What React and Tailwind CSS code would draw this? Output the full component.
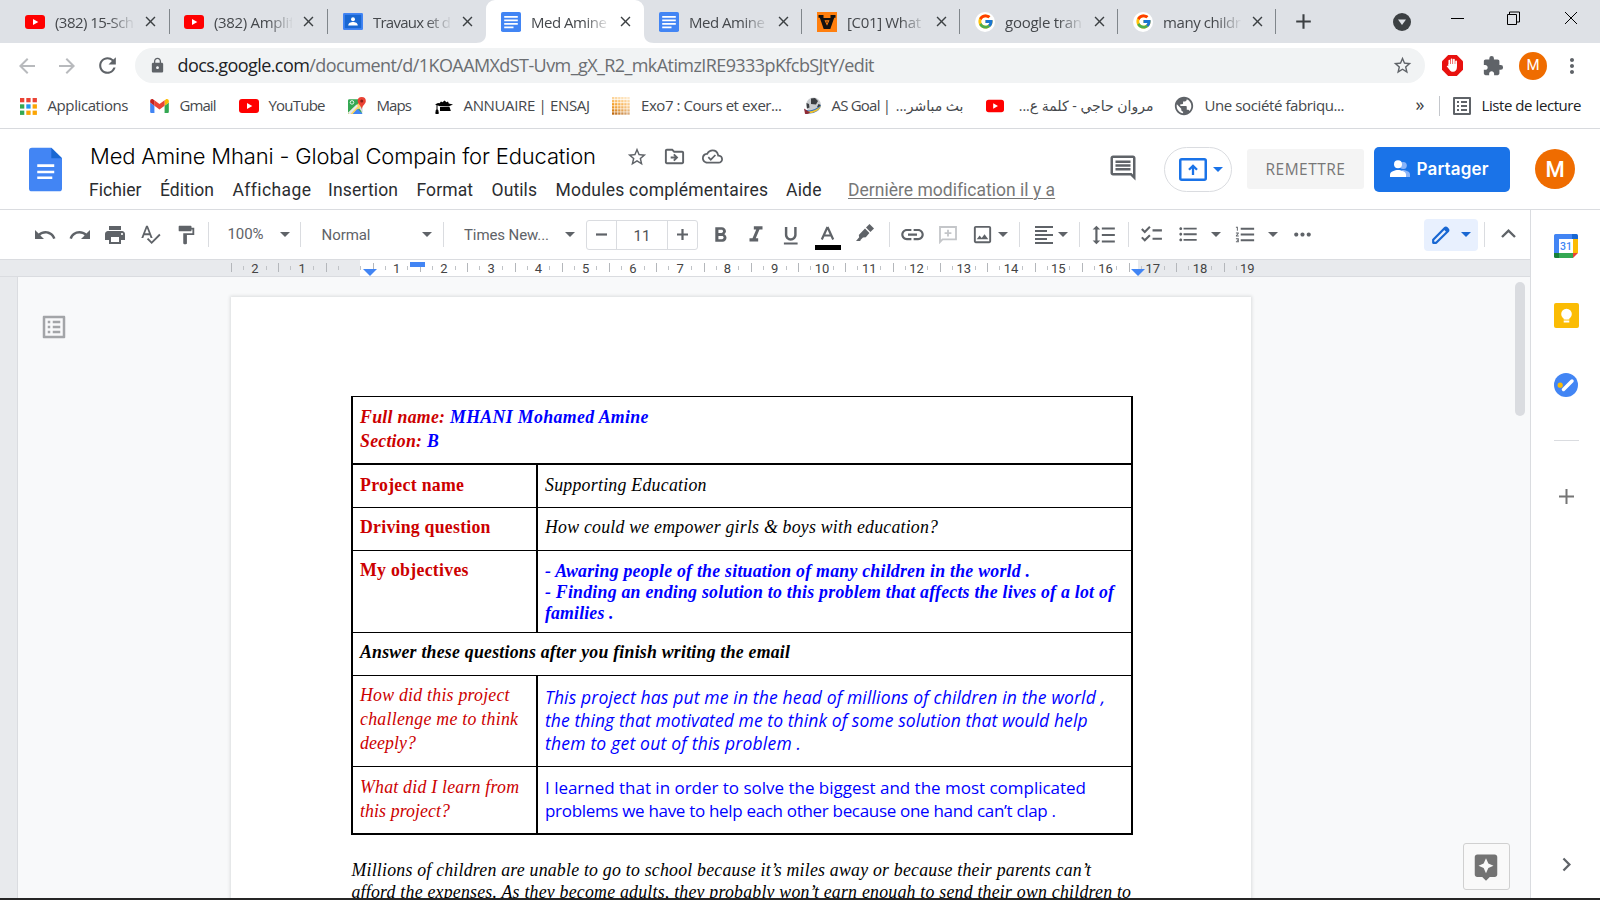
import React, { useLayoutEffect, useRef } from "react";
import {
  MdUndo, MdRedo, MdPrint, MdSpellcheck, MdFormatPaint, MdFormatBold, MdFormatItalic,
  MdFormatUnderlined, MdLink, MdOutlineImage, MdFormatAlignLeft, MdFormatLineSpacing,
  MdChecklist, MdFormatListBulleted, MdFormatListNumbered, MdMoreHoriz,
  MdStarBorder, MdOutlineDriveFileMove, MdOutlineCloudDone, MdLock,
  MdArrowBack, MdArrowForward, MdRefresh, MdExtension, MdMoreVert, MdPublic, MdListAlt,
  MdAdd, MdClose, MdChevronRight, MdAssistant, MdOutlineInsertComment,
} from "react-icons/md";
import { FcGoogle } from "react-icons/fc";

const UI = "font-['Segoe_UI','Open_Sans',sans-serif]";

/* A single line of text whose letter spacing is set so that it takes up w pixels. */
function Fit({ w, className = "", children }) {
  const ref = useRef(null);
  useLayoutEffect(() => {
    const el = ref.current;
    el.style.letterSpacing = "0px";
    const natural = el.getBoundingClientRect().width;
    const n = el.textContent.length;
    el.style.letterSpacing = `${(w - natural) / Math.max(1, n - 1)}px`;
  }, [w]);
  return (
    <span className={`block shrink-0 whitespace-pre ${className}`} style={{ width: w }}>
      <span ref={ref} className="whitespace-pre">{children}</span>
    </span>
  );
}

const YouTube = ({ className = "w-[20px] h-[14px]" }) => (
  <svg viewBox="0 0 20 14" className={className}>
    <rect width="20" height="14" rx="3" fill="#f00" />
    <path d="M8 4l5.3 3L8 10z" fill="#fff" />
  </svg>
);
const Classroom = () => (
  <svg viewBox="0 0 20 17" className="w-[20px] h-[17px]">
    <rect width="20" height="17" rx="1.2" fill="#4285f4" />
    <rect x="1.8" y="1.8" width="16.4" height="13.4" fill="#1967d2" />
    <circle cx="10" cy="6.3" r="2" fill="#fff" />
    <path d="M5.2 12.6c0-2.6 2.6-3.6 4.8-3.6s4.8 1 4.8 3.6z" fill="#fff" />
  </svg>
);
const DocFav = () => (
  <svg viewBox="0 0 20 20" className="w-[20px] h-[20px]">
    <rect width="20" height="20" rx="1.8" fill="#4285f4" />
    <path d="M3.2 4.8h13.6M3.2 8.3h13.6M3.2 11.8h13.6M3.2 15.3h9.3" stroke="#fff" strokeWidth="1.8" />
  </svg>
);
const Orange = () => (
  <svg viewBox="0 0 20 20" className="w-[20px] h-[20px]">
    <rect width="20" height="20" fill="#ff7f0e" />
    <path d="M1.500 3h5v3h7V3h5v2.800h-1.300L13.300 17H6.700L2.800 5.800H1.500z" fill="#111" />
    <path d="M7.500 8.300h5L10 13.800z" fill="#ff7f0e" />
    <path d="M9.200 9.600h1.600L10 11.400z" fill="#111" />
  </svg>
);
const GFav = () => (
  <span className="flex w-[20px] h-[20px] rounded-full bg-white items-center justify-center">
    <FcGoogle size={17} />
  </span>
);
const Apps = () => {
  const c = ["#ea4335", "#ea4335", "#ea4335", "#34a853", "#2196f3", "#fba504", "#34a853", "#fba504", "#fba504"];
  return (
    <svg viewBox="0 0 17 17" className="w-[17px] h-[17px]">
      {c.map((f, i) => <rect key={i} x={(i % 3) * 6.3} y={Math.floor(i / 3) * 6.3} width="4.3" height="4.3" fill={f} />)}
    </svg>
  );
};
const Gmail = () => (
  <svg viewBox="52 42 88 66" className="w-[19px] h-[14px]">
    <path fill="#4285f4" d="M58 108h14V74L52 59v43c0 3.32 2.69 6 6 6" />
    <path fill="#34a853" d="M120 108h14c3.32 0 6-2.69 6-6V59l-20 15" />
    <path fill="#fbbc04" d="M120 48v26l20-15v-8c0-7.42-8.47-11.65-14.4-7.2" />
    <path fill="#ea4335" d="M72 74V48l24 18 24-18v26L96 92" />
    <path fill="#c5221f" d="M52 51v8l20 15V48l-5.600-4.200c-5.940-4.450-14.400-.220-14.400 7.200" />
  </svg>
);
const Maps = () => (
  <svg viewBox="0 0 19 19" className="w-[18px] h-[18px]">
    <path d="M1.500 2.500h13v15.500h-13A1.500 1.500 0 010 16.500V4a1.500 1.500 0 011.500-1.500z" fill="#34a853" />
    <path d="M0 17L15 3v6L5.500 18H1z" fill="#fdd663" />
    <path d="M5 18l5-5.500 5.500 5.500z" fill="#4285f4" />
    <path d="M0 16.500L9 8l1.500 1.500L2.500 18H1.500z" fill="#e8eaed" />
    <path d="M11.500 11.500l4 5.500V9z" fill="#dadce0" />
    <circle cx="4.200" cy="5.700" r="1.900" fill="none" stroke="#fff" strokeWidth=".9" />
    <path d="M14.500 0a4.300 4.300 0 00-4.300 4.300c0 3.200 3.400 4.200 4.300 8.700.9-4.500 4.300-5.500 4.300-8.700A4.300 4.300 0 0014.500 0z" fill="#ea4335" />
    <circle cx="14.500" cy="4.300" r="1.600" fill="#8c1d18" />
  </svg>
);
const Cap = () => (
  <svg viewBox="0 0 18 14" className="w-[18px] h-[14px]">
    <path d="M0 4.500L3 3l1.500.3L6 1.500l1.500.7L9.500.5l2 1.700L13 1.500l.8 2L18 4.500l-4 1.700H5z" fill="#000" />
    <path d="M5 7l9.500-.3 1.300 4.300H5z" fill="#000" />
    <path d="M2 5v5M1.300 10h1.500l.5 3.500H.8z" stroke="#000" strokeWidth="1" fill="#000" />
  </svg>
);
const Exo = () => (
  <svg viewBox="0 0 18 18" className="w-[18px] h-[18px]">
    {Array.from({ length: 36 }, (_, i) => {
      const r = Math.floor(i / 6), c = i % 6;
      const fills = ["#fcd49a", "#fbb95c", "#f5a02c", "#ee9a2c", "#d98218", "#bf6a10"];
      return <rect key={i} x={c * 3.060} y={r * 3.060} width="2.400" height="2.400" fill={fills[r]} opacity={1 - c * 0.090} />;
    })}
  </svg>
);
const Ball = () => (
  <svg viewBox="0 0 19 18" className="w-[19px] h-[18px]">
    <circle cx="10.500" cy="8" r="7.500" fill="#c9cccf" />
    <path d="M8 1.500l4-.5 3 3-2 3.500-5-.5zM3.500 6l2.500 1 .5 3.500-2.500 1zM15.500 7l2.300 1-1.800 3-2-1z" fill="#3b3e42" />
    <path d="M1 12c5 3 11 1 17-4-1 6-9 10-14 8z" fill="#2b6fc4" />
    <path d="M3 14c5 1.500 10-1 15-5C16 14 9 17 5 16z" fill="#f3c32d" />
    <path d="M1 11.500l6 4c-2 1.700-4 1.700-5 1.200z" fill="#8e2a35" />
  </svg>
);
const Tri = ({ className = "", fill = "#5f6368" }) => (
  <svg viewBox="0 0 10 5" className={`w-[10px] h-[5px] ${className}`}><path d="M0 0h10L5 5z" fill={fill} /></svg>
);

const tabs = [
  { icon: <YouTube />, t: "(382) 15-Sch", w: 79, sep: true, pad: "pl-[13px]", box: "w-[79px]" },
  { icon: <YouTube />, t: "(382) Amplif", w: 80, sep: true, pad: "pl-[14px]", box: "w-[78px]" },
  { icon: <Classroom />, t: "Travaux et d", w: 78 },
  { icon: <DocFav />, t: "Med Amine", w: 76, active: true },
  { icon: <DocFav />, t: "Med Amine", w: 76, sep: true },
  { icon: <Orange />, t: "[C01] What", w: 74, sep: true },
  { icon: <GFav />, t: "google tran", w: 77, sep: true },
  { icon: <GFav />, t: "many childr", w: 78, sep: true },
];

function Tab({ icon, t, w, active, sep, pad = "pl-[15px]", box = "w-[78px]" }) {
  return (
    <div className={`relative flex w-[158px] h-[43px] shrink-0 items-center ${pad} ${active ? "bg-white rounded-t-[9px]" : ""}`}>
      {active && (
        <svg viewBox="0 0 178 9" className="absolute left-[-10px] bottom-0 w-[178px] h-[9px]">
          <path d="M10 0v9H0c6 0 10-3 10-9zM168 0v9h10c-6 0-10-3-10-9z" fill="#fff" />
        </svg>
      )}
      <span className="flex w-[20px] shrink-0 justify-center">{icon}</span>
      <div className={`ml-[10px] shrink-0 overflow-hidden whitespace-nowrap [mask-image:linear-gradient(to_right,black_68%,transparent_102%)] ${box}`}>
        <Fit w={w} className="text-[15px] leading-[22px] text-[#45484c]">{t}</Fit>
      </div>
      <MdClose className="ml-[7.500px] shrink-0 text-[#3c4043]" size={17} />
      {sep && <span className="ml-auto w-px h-[25px] bg-[#80868b]" />}
    </div>
  );
}

function TabStrip() {
  return (
    <div className="flex h-[43px] bg-[#dee1e6] pl-[12px] items-center">
      {tabs.map((t, i) => <Tab key={i} {...t} />)}
      <MdAdd className="ml-[15px] shrink-0 text-[#3c4043]" size={25} />
      <svg viewBox="0 0 18 18" className="ml-[77px] shrink-0 w-[18px] h-[18px]">
        <circle cx="9" cy="9" r="9" fill="#3c4043" /><path d="M5 6.500h8L9 12z" fill="#dee1e6" />
      </svg>
      <svg viewBox="0 0 128 14" className="ml-[40px] mb-[7px] shrink-0 w-[128px] h-[14px]" fill="none" stroke="#000" strokeWidth="1">
        <path d="M0 7.500h13M56.500 3.500h9v10h-9zM58.500 3.500v-2.500h10v10h-2.500M114 1l12 12M126 1l-12 12" />
      </svg>
    </div>
  );
}

function AddressBar() {
  return (
    <div className="flex h-[45px] items-center bg-white [&>*]:shrink-0">
      <MdArrowBack className="ml-[15px] text-[#b8babd]" size={24} />
      <MdArrowForward className="ml-[16px] text-[#b8babd]" size={24} />
      <MdRefresh className="ml-[16px] text-[#5f6368]" size={25} />
      <div className="ml-[15px] flex h-[35px] w-[1290px] items-center rounded-full bg-[#f1f3f4] pl-[14px]">
        <MdLock size={17} className="text-[#5f6368]" />
        <Fit w={697} className="ml-[11.500px] mb-[1px] text-[18px] leading-[26px] text-[#6b6e72]">
          <span className="text-[#202124]">docs.google.com</span>/document/d/1KOAAMXdST-Uvm_gX_R2_mkAtimzIRE9333pKfcbSJtY/edit
        </Fit>
        <MdStarBorder size={21} className="ml-auto mr-[12px] text-[#5f6368]" />
      </div>
      <svg viewBox="0 0 21 21" className="ml-[17px] w-[21px] h-[21px]">
        <path d="M6.200 0h8.600L21 6.200v8.600L14.800 21H6.200L0 14.800V6.200z" fill="#e8110f" />
        <path d="M7.300 11V5.700M9.600 10V4.300M11.900 10V4.600M14.100 11V6.300" stroke="#fff" strokeWidth="1.700" strokeLinecap="round" />
        <path d="M6.500 9h8.400v3.500c0 2.600-1.600 4.300-3.700 4.300-2 0-3-.8-3.900-2.400L4.700 11.300c.6-.8 1.300-.6 1.800 0z" fill="#fff" />
      </svg>
      <MdExtension size={22} className="ml-[19px] text-[#5f6368]" />
      <span className="ml-[15px] flex h-[28px] w-[28px] items-center justify-center rounded-full bg-[#ef6c00] font-[Roboto,sans-serif] text-[15px] text-white">M</span>
      <MdMoreVert size={24} className="ml-[13px] text-[#5f6368]" />
    </div>
  );
}

function Bookmarks() {
  const t = "mb-[2px] text-[15px] leading-[22px] text-[#45484c]";
  const ar = "block whitespace-nowrap text-[14px] leading-[22px] text-[#45484c] font-['Segoe_UI','Open_Sans','DejaVu_Sans',sans-serif]";
  return (
    <div className="flex h-[41px] items-center bg-white border-b border-[#d8dade] pb-[4px] [&>*]:shrink-0">
      <span className="ml-[19.500px]"><Apps /></span>
      <Fit w={81} className={`ml-[11px] ${t}`}>Applications</Fit>
      <span className="ml-[21.500px]"><Gmail /></span>
      <Fit w={37} className={`ml-[10.500px] ${t}`}>Gmail</Fit>
      <span className="ml-[22px]"><YouTube /></span>
      <Fit w={57} className={`ml-[10px] ${t}`}>YouTube</Fit>
      <span className="ml-[22px]"><Maps /></span>
      <Fit w={35.500} className={`ml-[11px] ${t}`}>Maps</Fit>
      <span className="ml-[22.500px] mt-[2px]"><Cap /></span>
      <Fit w={126.500} className={`ml-[11px] ${t}`}>ANNUAIRE | ENSAJ</Fit>
      <span className="ml-[21.500px]"><Exo /></span>
      <Fit w={141} className={`ml-[11.500px] ${t}`}>Exo7 : Cours et exer...</Fit>
      <span className="ml-[21px]"><Ball /></span>
      <div className="ml-[9.500px] flex w-[132px] items-center justify-between">
        <Fit w={59.500} className={t}>AS Goal |</Fit>
        <span dir="rtl" className={ar}>بث مباشر...</span>
      </div>
      <span className="ml-[22px]"><YouTube className="w-[18px] h-[14px]" /></span>
      <div className="ml-[12px] flex w-[138px] justify-end">
        <span dir="rtl" className={ar}>مروان حاجي - كلمة ع...</span>
      </div>
      <MdPublic size={22} className="ml-[19.500px] text-[#5f6368]" />
      <Fit w={140} className={`ml-[9.500px] ${t}`}>Une société fabriqu...</Fit>
      <span className="ml-[71px] mb-[4px] w-[10px] text-[18px] leading-[20px] text-[#3c4043]">»</span>
      <span className="ml-[13px] h-[20px] w-px bg-[#c4c7cc]" />
      <MdListAlt size={24} className="ml-[10px] text-[#5f6368]" />
      <Fit w={100} className={`ml-[8px] ${t} text-[#202124]`}>Liste de lecture</Fit>
    </div>
  );
}

const menus = [
  ["Fichier", 52.5, "ml-0"], ["Édition", 54, "ml-[18.500px]"], ["Affichage", 77, "ml-[18.500px]"],
  ["Insertion", 70, "ml-[18.500px]"], ["Format", 56.5, "ml-[18.500px]"], ["Outils", 45.5, "ml-[18.500px]"],
  ["Modules complémentaires", 212.5, "ml-[18.500px]"], ["Aide", 35.5, "ml-[18px]"],
];

function Header() {
  return (
    <header className="flex h-[81px] border-b border-[#dadce0] bg-white [&>*]:shrink-0">
      <svg viewBox="0 0 34 45" className="ml-[28.500px] mt-[18px] h-[45px] w-[33px]">
        <path d="M3 0h20l11 11v31a3 3 0 01-3 3H3a3 3 0 01-3-3V3a3 3 0 013-3z" fill="#4285f4" />
        <path d="M23 0l11 11H23z" fill="#1967d2" />
        <path d="M8.500 18.500H26M8.500 25H26M8.500 31h15.500" stroke="#fff" strokeWidth="2.600" />
      </svg>
      <div className="ml-[27.500px] flex w-[1000px] flex-col pt-[13px]">
        <div className="flex h-[29px] items-center text-[#5f6368] [&>*]:shrink-0">
          <Fit w={506} className="ml-[1px] font-['Google_Sans','Product_Sans',Inter,sans-serif] font-light text-[22px] leading-[29px] text-black">Med Amine Mhani - Global Compain for Education</Fit>
          <MdStarBorder size={22} className="ml-[30px]" />
          <MdOutlineDriveFileMove size={23} className="ml-[14.500px]" />
          <MdOutlineCloudDone size={21} className="ml-[16px]" />
        </div>
        <nav className="mt-[7px] flex font-[Roboto,sans-serif] text-[17.500px] leading-[24px] text-[#2b2d30]">
          {menus.map(([t, w, m]) => <Fit key={t} w={w} className={m}>{t}</Fit>)}
          <Fit w={206.500} className="ml-[26.500px] text-[#777] underline decoration-1 underline-offset-2">Dernière modification il y a</Fit>
        </nav>
      </div>
      <MdOutlineInsertComment size={30} className="ml-[19px] mt-[24px] text-[#5f6368]" />
      <div className="ml-[26px] mt-[18px] flex h-[45px] w-[68px] items-center rounded-full border border-[#dadce0] pl-[14px]">
        <svg viewBox="0 0 28 23" className="h-[23px] w-[28px]" fill="none" stroke="#1a73e8">
          <rect x="1.250" y="1.250" width="25.500" height="20.500" rx="1.500" strokeWidth="2.500" />
          <path d="M14 17V8M10 11.800L14 7.800l4 4" strokeWidth="2.300" />
        </svg>
        <Tri className="ml-[6px]" fill="#1a73e8" />
      </div>
      <div className="ml-[15px] mt-[20px] flex h-[40px] w-[117px] items-center rounded-[3px] bg-[#f4f4f4] pl-[18.500px] pt-[2px] font-['Open_Sans',sans-serif] text-[15.500px] text-[#777]">
        <Fit w={79.500}>REMETTRE</Fit>
      </div>
      <div className="ml-[10px] mt-[18px] flex h-[45px] w-[136px] items-center rounded-[5px] bg-[#1a73e8] pb-[2px] pl-[15.500px] text-white">
        <svg viewBox="0 0 20 17" className="h-[17px] w-[20px]">
          <circle cx="13.300" cy="5.500" r="3.500" fill="#8ab4f8" /><path d="M12 10c4 0 8 1.500 8 4.500V17h-7z" fill="#8ab4f8" />
          <circle cx="8" cy="4.200" r="4" fill="#fff" /><path d="M0 14.500C0 11.500 5 10 8 10s8 1.500 8 4.500V17H0z" fill="#fff" />
        </svg>
        <Fit w={72} className="ml-[7px] font-['Google_Sans',Inter,sans-serif] text-[17px] font-semibold leading-[24px]">Partager</Fit>
      </div>
      <span className="ml-[25px] mt-[20px] flex h-[40px] w-[40px] items-center justify-center rounded-full bg-[#ef6c00] pt-[1px] font-[Roboto,sans-serif] text-[22px] font-medium text-white">M</span>
    </header>
  );
}

const Cell = ({ className, children }) => <span className={`flex h-[32px] items-center justify-center ${className}`}>{children}</span>;
const Sep = ({ className }) => <span className={`h-[25px] w-px bg-[#dadce0] ${className}`} />;

function Toolbar() {
  return (
    <div className="flex h-[50px] items-center border-b border-[#dadce0] bg-white font-[Roboto,sans-serif] text-[15px] leading-[22px] text-[#5f6368] [&>*]:shrink-0">
      <Cell className="ml-[27px] w-[35px]"><MdUndo size={24} /></Cell>
      <Cell className="w-[36px]"><MdRedo size={24} /></Cell>
      <Cell className="w-[34px]"><MdPrint size={24} /></Cell>
      <Cell className="w-[37px]"><MdSpellcheck size={22.5} /></Cell>
      <Cell className="w-[33px]"><MdFormatPaint size={22} /></Cell>
      <Sep className="ml-[6px]" />
      <Fit w={36} className="ml-[18.500px] mb-[2px]">100%</Fit>
      <Tri className="ml-[16.500px]" />
      <Sep className="ml-[10px]" />
      <Fit w={49} className="ml-[20.500px]">Normal</Fit>
      <Tri className="ml-[51px]" />
      <Sep className="ml-[11.500px]" />
      <Fit w={85} className="ml-[20px]">Times New...</Fit>
      <Tri className="ml-[15.500px]" />
      <div className="ml-[11.500px] flex h-[30px] w-[112px] items-stretch rounded-[3px] border border-[#dadce0]">
        <Cell className="h-auto w-[29px]">
          <svg viewBox="0 0 11 11" className="h-[11px] w-[11px]"><path d="M0 5.500h11" stroke="#5f6368" strokeWidth="2.200" /></svg>
        </Cell>
        <span className="flex w-[52px] shrink-0 items-center justify-center border-x border-[#dadce0] pt-[2px] text-[#505357]">11</span>
        <Cell className="h-auto w-[28px]">
          <svg viewBox="0 0 11 11" className="h-[11px] w-[11px]"><path d="M0 5.500h11M5.500 0v11" stroke="#5f6368" strokeWidth="2.200" /></svg>
        </Cell>
      </div>
      <Cell className="ml-[4px] w-[37px] pt-[1px]"><MdFormatBold size={25} /></Cell>
      <Cell className="w-[34px] pt-[1px]"><MdFormatItalic size={26} /></Cell>
      <Cell className="w-[36px]"><MdFormatUnderlined size={23.5} className="mt-[3px]" /></Cell>
      <Cell className="w-[37px] flex-col">
        <svg viewBox="0 0 26 28" className="mt-[2px] h-[28px] w-[26px]">
          <path d="M12.500 5L6.800 17.500M12.500 5l5.700 12.500M8.800 13.500h7.400" stroke="#5f6368" strokeWidth="2.200" fill="none" />
          <path d="M0 23h26v5H0z" fill="#000" />
        </svg>
      </Cell>
      <Cell className="w-[38px]">
        <svg viewBox="0 0 18 17" className="mb-[5px] h-[17px] w-[18px]" fill="#5f6368">
          <path d="M13.500 0L18 4.400l-3.600 3.500-4.400-4.300z" />
          <path d="M9 4.600l4.400 4.300-3.600 4.300-2.800.3-2.300 2.300-.5 1.200H0l3.200-3.700L2.800 11z" />
        </svg>
      </Cell>
      <Sep className="ml-[5px]" />
      <Cell className="ml-[6.500px] w-[32px]"><MdLink size={27} /></Cell>
      <Cell className="w-[39px]">
        <svg viewBox="0 0 18 18" className="h-[18px] w-[18px]" fill="none" stroke="#c4c6c9" strokeWidth="1.800">
          <path d="M1 16V1h16v12.300H3.500z" /><path d="M9 3.800v6.800M5.600 7.200h6.800" />
        </svg>
      </Cell>
      <Cell className="w-[29px]"><MdOutlineImage size={23} /></Cell>
      <Tri className="ml-[1.500px]" />
      <Sep className="ml-[11px]" />
      <Cell className="ml-[10px] w-[28px]"><MdFormatAlignLeft size={24} /></Cell>
      <Tri />
      <Sep className="ml-[11px]" />
      <Cell className="ml-[7.500px] w-[32px]"><MdFormatLineSpacing size={26} /></Cell>
      <Sep className="ml-[8px]" />
      <Cell className="ml-[7px] w-[32px]"><MdChecklist size={25} /></Cell>
      <Cell className="w-[41px]"><MdFormatListBulleted size={22.5} /></Cell>
      <Tri className="ml-[2px]" />
      <Cell className="ml-[10px] w-[30px]"><MdFormatListNumbered size={23} /></Cell>
      <Tri className="ml-[7px]" />
      <Cell className="ml-[8.500px] w-[32px]"><MdMoreHoriz size={25} /></Cell>
      <div className="ml-[106px] flex h-[32px] w-[54px] items-center rounded-[4px] bg-[#e8f0fe] pl-[8px]">
        <svg viewBox="0 0 18 18" className="h-[18px] w-[18px]">
          <path d="M1.200 16.800v-3L12.800 2.100a1.400 1.400 0 012 0l1.100 1.100a1.400 1.400 0 010 2L4.200 16.800z" fill="none" stroke="#1967d2" strokeWidth="2.200" strokeLinejoin="round" />
          <path d="M13.500 1l3.700 3.600-2.200 2.200L11.300 3z" fill="#1967d2" />
        </svg>
        <Tri className="ml-[10.500px]" fill="#1967d2" />
      </div>
      <Sep className="ml-[6px]" />
      <Cell className="ml-[8px] w-[31px] pb-[2px]">
        <svg viewBox="0 0 15 9" className="h-[9px] w-[15px]"><path d="M1 8l6.500-6.300L14 8" fill="none" stroke="#5f6368" strokeWidth="2.400" /></svg>
      </Cell>
    </div>
  );
}

function Ruler() {
  const cells = Array.from({ length: 22 }, (_, i) => i - 2);
  return (
    <div className="relative flex h-[17px] border-b border-[#dadce0] bg-[#e8eaed]">
      <div className="w-[360px]" />
      <div className="w-[778px] bg-white" />
      <div className="absolute left-[231px] top-0 flex h-[16px]">
        {cells.map((n) => (
          <div key={n} className="flex h-full w-[47.270px]">
            <span className="mt-[3px] h-[9px] w-[12px] border-l border-[#b4b7bb]" />
            <div className="flex w-[23.600px] items-center justify-between">
              <span className="h-[4px] w-px bg-[#c0c3c7]" />
              <span className="pt-[2px] font-[Roboto,sans-serif] text-[13px] leading-[16px] text-[#444]">{n === 0 ? "" : Math.abs(n)}</span>
              <span className={`h-[4px] w-px ${n === 19 ? "" : "bg-[#c0c3c7]"}`} />
            </div>
          </div>
        ))}
      </div>
      <svg viewBox="0 0 14 7" className="absolute left-[363px] top-[9px] h-[7px] w-[14px]"><path d="M0 0h14L7 7z" fill="#4285f4" /></svg>
      <span className="absolute left-[410px] top-[2px] h-[5px] w-[15px] bg-[#4285f4]" />
      <svg viewBox="0 0 14 7" className="absolute left-[1130.500px] top-[9px] h-[7px] w-[14px]"><path d="M0 0h14L7 7z" fill="#4285f4" /></svg>
    </div>
  );
}

const RED = "text-[#c00]";
const BLUE = "text-[#00f]";
const COMIC = "font-['Comic_Sans_MS','Open_Sans',sans-serif] leading-[23px]";

function Row({ h, left, right, lp, rp }) {
  return (
    <div className={`flex border-black ${h}`}>
      <div className={`w-[185px] shrink-0 border-r-2 border-black pl-[7px] ${lp}`}>{left}</div>
      <div className={`pl-[7px] ${rp}`}>{right}</div>
    </div>
  );
}

function Page() {
  return (
    <div className="ml-[213px] mt-[20px] h-[640px] w-[1020px] shrink-0 bg-white pl-[120px] pt-[99px] font-['Times_New_Roman','Liberation_Serif',serif] text-[17.800px] leading-[24px] text-black shadow-[0_0_3px_1px_rgba(60,64,67,0.15)]">
      <div className="w-[782px] border-x-2 border-b-2 border-t border-black">
        <div className="h-[68px] border-b-2 border-black pl-[7px] pt-[8px] font-bold italic">
          <div className="flex gap-[5px]">
            <Fit w={85} className={RED}>Full name:</Fit>
            <Fit w={198.500} className={BLUE}>MHANI Mohamed Amine</Fit>
          </div>
          <div className="flex gap-[5px]">
            <Fit w={62} className={RED}>Section:</Fit>
            <span className={BLUE}>B</span>
          </div>
        </div>
        <Row h="h-[43px] border-b" lp="pt-[8px]" rp="pt-[8px]"
          left={<Fit w={104} className={`font-bold ${RED}`}>Project name</Fit>}
          right={<Fit w={161.500} className="italic">Supporting Education</Fit>} />
        <Row h="h-[43px] border-b" lp="pt-[7px]" rp="pt-[7px]"
          left={<Fit w={130.500} className={`font-bold ${RED}`}>Driving question</Fit>}
          right={<Fit w={393} className="italic">{"How could we empower girls & boys with education?"}</Fit>} />
        <Row h="h-[82px] border-b" lp="pt-[7px]" rp={`pt-[10px] font-bold italic leading-[21px] ${BLUE}`}
          left={<Fit w={108.500} className={`font-bold ${RED}`}>My objectives</Fit>}
          right={<>
            <Fit w={485}>- Awaring people of the situation of many children in the world .</Fit>
            <Fit w={569}>- Finding an ending solution to this problem that affects the lives of a lot of</Fit>
            <Fit w={68.500}>families .</Fit>
          </>} />
        <div className="h-[43px] border-b border-black pl-[7px] pt-[7px] font-bold italic">
          <Fit w={430}>Answer these questions after you finish writing the email</Fit>
        </div>
        <Row h="h-[91px] border-b" lp={`pt-[7px] italic ${RED}`} rp={`pt-[10px] text-[17.500px] italic ${COMIC} ${BLUE}`}
          left={<>
            <Fit w={149.500}>How did this project</Fit>
            <Fit w={158}>challenge me to think</Fit>
            <Fit w={56}>deeply?</Fit>
          </>}
          right={<>
            <Fit w={560}>This project has put me in the head of millions of children in the world ,</Fit>
            <Fit w={542.500}>the thing that motivated me to think of some solution that would help</Fit>
            <Fit w={256}>them to get out of this problem .</Fit>
          </>} />
        <Row h="h-[66px]" lp={`pt-[8px] italic ${RED}`} rp={`pt-[9px] text-[17px] ${COMIC} ${BLUE}`}
          left={<>
            <Fit w={159}>What did I learn from</Fit>
            <Fit w={90}>this project?</Fit>
          </>}
          right={<>
            <Fit w={541}>I learned that in order to solve the biggest and the most complicated</Fit>
            <Fit w={511}>problems we have to help each other because one hand can’t clap .</Fit>
          </>} />
      </div>
      <div className="mt-[24px] pl-[0.500px] italic leading-[22px]">
        <Fit w={739.500}>Millions of children are unable to go to school because it’s miles away or because their parents can’t</Fit>
        <Fit w={779.500}>afford the expenses. As they become adults, they probably won’t earn enough to send their own children to</Fit>
      </div>
    </div>
  );
}

function Canvas() {
  return (
    <div className="relative flex h-[621px] overflow-hidden bg-[#f8f9fa]">
      <div className="w-[18px] shrink-0 border-r border-[#dadce0] bg-[#e8eaed]" />
      <Page />
      <MdListAlt size={30} className="absolute left-[38.500px] top-[35px] text-[#a3a5a8]" />
      <span className="absolute left-[1515px] top-[5px] h-[134px] w-[10px] rounded-full bg-[#dadce0]" />
      <span className="absolute left-[1463px] top-[566px] flex h-[47px] w-[47px] items-center justify-center rounded-[3px] border border-[#d0d0d0] bg-[#f9f9f9] pr-[1px]">
        <MdAssistant size={30} className="text-[#737373]" />
      </span>
    </div>
  );
}

function SidePanel() {
  return (
    <aside className="flex w-[70px] shrink-0 flex-col items-center border-l border-[#dadce0] bg-white pl-[1px] pt-[23.500px]">
      <svg viewBox="0 0 24 24" className="h-[24px] w-[24px] shrink-0">
        <path d="M1.500 0H18v5H5v14H0V1.500A1.500 1.500 0 011.500 0z" fill="#4285f4" />
        <path d="M18 0h4.500A1.500 1.500 0 0124 1.500V5h-6z" fill="#1967d2" />
        <path d="M19 5h5v14h-5z" fill="#fbbc04" />
        <path d="M5 19h14v5H5z" fill="#34a853" />
        <path d="M0 19h5v5H1.500A1.500 1.500 0 010 22.500z" fill="#188038" />
        <path d="M19 19h5l-5 5z" fill="#ea4335" />
        <path d="M5 5h14v14H5z" fill="#fff" />
        <text x="12" y="16" textAnchor="middle" fontSize="10.500" fontWeight="500" fontFamily="Roboto, sans-serif" fill="#4285f4">31</text>
      </svg>
      <svg viewBox="0 0 25 25" className="mt-[45px] h-[25px] w-[25px] shrink-0">
        <rect width="25" height="25" rx="2" fill="#fbbc04" />
        <circle cx="12.500" cy="11" r="5.300" fill="#fff" />
        <path d="M9.700 14h5.600v2.500H9.700zM9.700 17.500h5.600v2H9.700z" fill="#fff" />
      </svg>
      <svg viewBox="0 0 24 24" className="mt-[45px] h-[24px] w-[24px] shrink-0">
        <circle cx="12" cy="12" r="12" fill="#4285f4" />
        <path d="M9.500 16.500L18 8" stroke="#fff" strokeWidth="3.500" strokeLinecap="round" />
        <circle cx="6.200" cy="12.200" r="2.600" fill="#fbbc04" />
      </svg>
      <span className="mt-[43.500px] h-px w-[25px] shrink-0 bg-[#dadce0]" />
      <svg viewBox="0 0 15 15" className="mt-[48px] h-[15px] w-[15px] shrink-0"><path d="M7.500 0v15M0 7.500h15" stroke="#757575" strokeWidth="2" /></svg>
      <MdChevronRight size={27} className="mt-[347px] shrink-0 text-[#5f6368]" />
    </aside>
  );
}

export default function App() {
  return (
    <div className={`flex h-[900px] w-[1600px] flex-col overflow-hidden bg-white ${UI}`}>
      <TabStrip />
      <AddressBar />
      <Bookmarks />
      <Header />
      <div className="flex h-[688px] shrink-0">
        <main className="w-[1530px] shrink-0">
          <Toolbar />
          <Ruler />
          <Canvas />
        </main>
        <SidePanel />
      </div>
      <div className="h-[2px] shrink-0 bg-[#262626]" />
    </div>
  );
}
